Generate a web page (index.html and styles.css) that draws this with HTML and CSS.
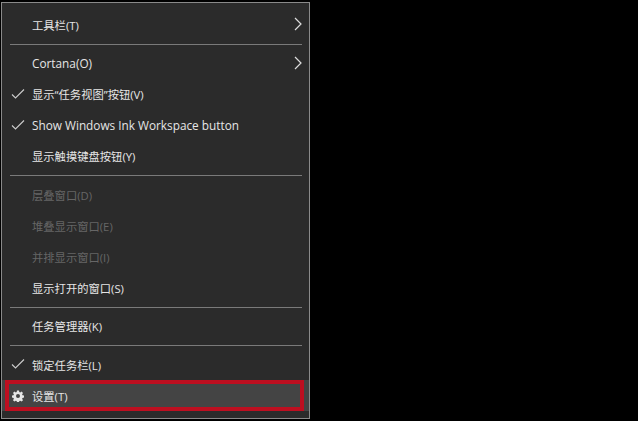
FILE: index.html
```html
<!DOCTYPE html>
<html lang="zh-CN">
<head>
<meta charset="UTF-8">
<title>任务栏菜单</title>
<link rel="stylesheet" href="styles.css">
</head>
<body>
<ul class="menu">
    <li class="item">
        <span class="zh">工具栏(T)</span>
        <svg class="arrow" viewBox="0 0 8 14"><path d="M1 1l6 6-6 6"/></svg>
    </li>
    <li class="sep"></li>
    <li class="item">
        <span>Cortana(O)</span>
        <svg class="arrow" viewBox="0 0 8 14"><path d="M1 1l6 6-6 6"/></svg>
    </li>
    <li class="item">
        <svg class="check" viewBox="0 0 14 10"><path d="M1 5.500l3.500 3.500 8.500-8.500"/></svg>
        <span class="zh">显示“任务视图”按钮(V)</span>
    </li>
    <li class="item">
        <svg class="check" viewBox="0 0 14 10"><path d="M1 5.500l3.500 3.500 8.500-8.500"/></svg>
        <span>Show Windows Ink Workspace button</span>
    </li>
    <li class="item"><span class="zh">显示触摸键盘按钮(Y)</span></li>
    <li class="sep"></li>
    <li class="item disabled"><span class="zh">层叠窗口(D)</span></li>
    <li class="item disabled"><span class="zh">堆叠显示窗口(E)</span></li>
    <li class="item disabled"><span class="zh">并排显示窗口(I)</span></li>
    <li class="item"><span class="zh">显示打开的窗口(S)</span></li>
    <li class="sep"></li>
    <li class="item"><span class="zh">任务管理器(K)</span></li>
    <li class="sep"></li>
    <li class="item">
        <svg class="check" viewBox="0 0 14 10"><path d="M1 5.500l3.500 3.500 8.500-8.500"/></svg>
        <span class="zh">锁定任务栏(L)</span>
    </li>
    <li class="item active">
        <svg class="gear" viewBox="0 0 24 24"><path fill-rule="evenodd" d="M10 1h4l.6 3.200 1.900.8 2.700-1.800 2.800 2.800-1.800 2.700.8 1.900 3 .6v4l-3 .6-.8 1.900 1.800 2.700-2.800 2.800-2.700-1.800-1.900.8-.6 3h-4l-.6-3-1.900-.8-2.700 1.800-2.800-2.800 1.800-2.700-.8-1.900-3-.6v-4l3-.6.8-1.900-1.800-2.700 2.800-2.800 2.700 1.800 1.900-.8zM12 8a4 4 0 1 0 0 8 4 4 0 0 0 0-8z"/></svg>
        <span class="zh">设置(T)</span>
    </li>
</ul>
</body>
</html>
```
FILE: styles.css
```css
* {
    margin: 0;
    padding: 0;
}

html,
body {
    height: 100%;
    background: #000;
}

body {
    padding: 2px 0 0 1px;
    box-sizing: border-box;
    font-family: "Open Sans", "Noto Sans CJK SC", sans-serif;
    font-size: 11.8px;
    color: #e6e6e6;
}

.menu {
    width: 309px;
    height: 417px;
    padding-top: 6px;
    box-sizing: border-box;
    border: 1px solid #8a8a8a;
    background: #2b2b2b;
    list-style: none;
}

.item {
    position: relative;
    display: flex;
    align-items: center;
    height: 31px;
    padding-left: 30px;
}

.zh {
    font-size: 11.3px;
}

.sep {
    height: 1px;
    margin: 3.500px 7px 3px 8px;
    background: #7a7a7a;
}

.disabled {
    color: #666;
}

.arrow {
    position: absolute;
    top: 8px;
    right: 7px;
    width: 8px;
    height: 14px;
    fill: none;
    stroke: #ddd;
    stroke-width: 1.2;
}

.check {
    position: absolute;
    top: 10px;
    left: 9px;
    width: 14px;
    height: 10px;
    fill: none;
    stroke: #ccc;
    stroke-width: 1.1;
}

.active {
    background: #444;
}

.active:after {
    content: '';
    position: absolute;
    top: 0;
    bottom: 0;
    left: 3px;
    right: 5px;
    border: 4px solid #bd0f20;
}

.gear {
    position: absolute;
    top: 10px;
    left: 10px;
    width: 12px;
    height: 12px;
    fill: #e6e6e6;
}
```
